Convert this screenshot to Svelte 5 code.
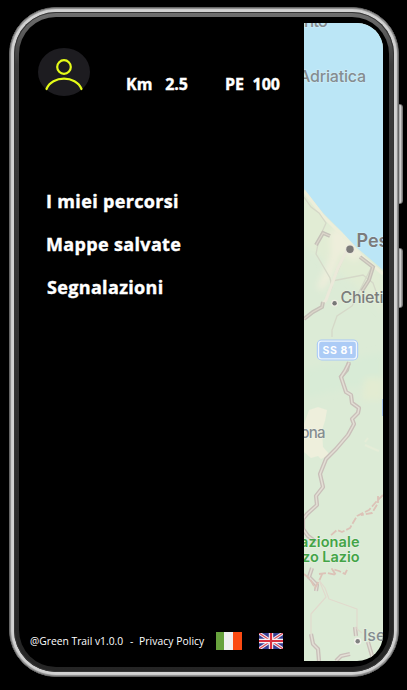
<script>
  const links = ['I miei percorsi', 'Mappe salvate', 'Segnalazioni'];
</script>

<main>
  <div class="key volume"></div>
  <div class="key power"></div>
  <div class="phone">
    <div class="bezel">
      <div class="display">
        <nav class="drawer">
          <header>
            <div class="avatar">
              <svg width="52" height="48" viewBox="0 0 52 48" fill="none" stroke="#e4fb18" stroke-width="2.2">
                <circle cx="26" cy="19" r="6.8" />
                <path d="M8.500 41C14 27.200 38 27.200 43.500 41" stroke-linecap="round" />
              </svg>
            </div>
            <div class="stat km"><span>Km</span><span>2.5</span></div>
            <div class="stat pe"><span>PE</span><span>100</span></div>
          </header>
          <ul>
            {#each links as link}
              <li>{link}</li>
            {/each}
          </ul>
          <footer>
            <span class="version">@Green Trail v1.0.0</span>
            <span class="dash">-</span>
            <span class="privacy">Privacy Policy</span>
            <svg class="it" width="26" height="18" viewBox="0 0 26 18">
              <path fill="#68a23d" d="M0 0h8v18H0z" />
              <path fill="#f0f0f0" d="M8 0h9v18H8z" />
              <path fill="#fb4a12" d="M17 0h9v18h-9z" />
            </svg>
            <svg class="uk" width="24" height="16" viewBox="0 0 24 16">
              <path fill="#343c91" d="M0 0h24v16H0z" />
              <path stroke="#f0eef5" stroke-width="3.2" d="M0 0l24 16M24 0L0 16" />
              <path stroke="#db4452" stroke-width="1.1" d="M0 0l24 16M24 0L0 16" />
              <path stroke="#f5f1f5" stroke-width="4.4" d="M12 0v16M0 8h24" />
              <path stroke="#d92f3e" stroke-width="2.2" d="M12 0v16M0 8h24" />
            </svg>
          </footer>
        </nav>
        <div class="map">
          <svg width="79" height="638" viewBox="304 23 79 638" fill="none">
            <defs>
              <filter id="soft" x="-30%" y="-30%" width="160%" height="160%"><feGaussianBlur stdDeviation="3" /></filter>
              <filter id="edge"><feGaussianBlur stdDeviation=".5" /></filter>
            </defs>
            <path fill="#dcebd6" d="M304 23h79v638h-79z" />
            <g filter="url(#soft)">
              <path fill="#e1ecd4" d="M304 190L383 275V312L350 280L304 245z" />
              <path fill="#d8ebd6" d="M304 370l79-18v28l-79 18z" />
              <path fill="#e3ecd2" d="M365 378h18v22h-21z" />
              <path fill="#eeeedb" d="M330 232l10-5 14 15 8 14-8 5-13-9-10 27-9 12-5-4 14-32z" />
            </g>
            <g filter="url(#edge)">
              <path fill="#bbe6f6" d="M304 23h79v247L369 258L356 247L342 232L323 213L304 189z" />
              <path stroke="#edeeda" stroke-width="3" d="M304 191L323 216L342 235L356 251L383 274" />
              <path fill="#eeefdc" d="M309 410l9-3 9 3-2 11-3 9 1 17 7 8-9 4-3-3-7 2-7-6-1-25z" />
              <path stroke="#e5edd8" stroke-width="2" d="M365 445l9 4 5 2M368 438l-3 4" />
            </g>
            <path stroke="#d5d8c8" stroke-width="1.3" d="M304 197l7 10 8 6 7 10-7 16M318 244l-2 10 14 24 2 9-7 15M332 284l12-27M332 281l31-6 10 8 5 14M371 268l-19 38-15 10-5 14v7" />
            <path stroke="#ebe9da" stroke-width="3" d="M347 250l-9 18-6 16-6 16-7 9" />
            <path stroke="#c5c1b8" stroke-width="4" d="M316 245l7-12 7 3M304 319l9-7 9-5 1-5M360 257l13 10-4 13-7 11M349 362l-2 8-7 8" />
            <path stroke="#dcd6ca" stroke-width="1.200" d="M316 245l7-12 7 3M304 319l9-7 9-5 1-5M360 257l13 10-4 13-7 11M349 362l-2 8-7 8" />
            <g stroke-linejoin="round" filter="url(#edge)">
              <path stroke="#c9bfb9" stroke-width="4.200" d="M349 363l-4 8-4 6 5 15 5 3 1 8 7 5-1 5-6 6 2 5-6 11-12 14-10 10-6 15 3 13-7 9 1 9-10 9-4 5v10l5 7 8 6M312 568l-3 9 8 8-1 6M311 634l2 10 5 5 1 12M336 661l5-5 9-2M355 627l1 9M368 642l5 17" />
              <path stroke="#e3dfd5" stroke-width="1.500" d="M349 363l-4 8-4 6 5 15 5 3 1 8 7 5-1 5-6 6 2 5-6 11-12 14-10 10-6 15 3 13-7 9 1 9-10 9-4 5v10l5 7 8 6M312 568l-3 9 8 8-1 6M311 634l2 10 5 5 1 12M336 661l5-5 9-2M355 627l1 9M368 642l5 17" />
              <path stroke="#dcc2b7" stroke-width="1.800" stroke-dasharray="7 2" d="M383 495l-7 7-7 8-12 6-7 12-8 4-5-2-7 6M378 496v7l-6 10-11 2M319 574l8-1 9 2-4-6 7 2 6 3 3-6M304 574l6 5 5 9 5-9 3-7" />
              <path stroke="#e1dacd" stroke-width="1.200" d="M319 580l6 8 4 11 28 10v20l5 4M319 580l7 17-15 17v20" />
            </g>
            <rect x="316.800" y="339.500" width="41.400" height="21" rx="5" fill="#a6c8f7" />
            <rect x="318.500" y="341.200" width="38" height="17.600" rx="3" fill="#accbf6" stroke="#f0f6fc" stroke-width="1.300" />
            <path stroke="#84aef8" stroke-width="1.200" d="M383 399v17" />
            <circle cx="350" cy="249.300" r="4.700" fill="#e9e5dc" />
            <circle cx="350" cy="249.300" r="3.700" fill="#7c7a79" />
            <circle cx="334.600" cy="303.200" r="3.400" fill="#f0eee4" />
            <circle cx="334.600" cy="303.200" r="2.200" fill="#777" />
            <circle cx="357.700" cy="641.200" r="3.700" fill="#f1f1e9" />
            <circle cx="357.700" cy="641.200" r="2.200" fill="#808080" />
            <g class="place">
              <text x="304" y="27" font-size="17" textLength="24">nto</text>
              <text x="299" y="82" font-size="16" textLength="67">Adriatica</text>
              <text x="356.500" y="247" font-size="18" font-weight="600" fill="#7b7b7b">Pes</text>
              <text x="340.500" y="303" font-size="16" textLength="43" fill="#7b7d7c">Chieti</text>
              <text x="300.500" y="438" font-size="15" textLength="25">ona</text>
              <text x="363" y="641" font-size="16">Ise</text>
            </g>
            <text class="road" x="322.500" y="353.700" textLength="30">SS 81</text>
            <g class="park">
              <text x="300" y="547" textLength="59.500">azionale</text>
              <text x="302" y="562" textLength="57.500">zo Lazio</text>
            </g>
          </svg>
        </div>
      </div>
    </div>
  </div>
</main>

<style>
  :global(body) {
    background: #000;
  }

  main {
    position: relative;
    width: 407px;
    height: 690px;
    box-sizing: border-box;
    padding: 7px 8px 13px 9px;
    background: #000;
    overflow: hidden;
    font-family: 'Open Sans', 'Noto Sans', sans-serif;
    color: #fff;
  }

  .key {
    position: absolute;
    left: 397px;
    width: 6px;
    box-sizing: border-box;
    border: 1px solid #777;
    border-radius: 0 3px 3px 0;
    background: linear-gradient(90deg, #777, #d5d5d5 60%, #888);
  }

  .volume {
    top: 104px;
    height: 100px;
  }

  .power {
    top: 248px;
    height: 60px;
  }

  .phone {
    position: relative;
    height: 670px;
    box-sizing: border-box;
    border: 1px solid #666;
    border-radius: 47px;
    padding: 4px;
    background: #d2d2d2;
    box-shadow: inset 0 0 1px 1px #888;
  }

  .bezel {
    height: 660px;
    box-sizing: border-box;
    border-radius: 42px;
    padding: 5px;
    background: linear-gradient(#707070, #3c3c3c 8%, #303030 60%, #252525);
    box-shadow: inset 0 0 0 1px #353535;
  }

  .display {
    display: flex;
    height: 650px;
    border-radius: 37px;
    background: #000;
    overflow: hidden;
  }

  .drawer {
    display: flex;
    flex-direction: column;
    width: 285px;
    flex: none;
  }

  header {
    display: flex;
    padding: 31px 0 0 19px;
    height: 48px;
    font-size: 16px;
    font-weight: 700;
    line-height: 22px;
    -webkit-text-stroke: 0.4px #fff;
  }

  .avatar {
    width: 52px;
    height: 48px;
    border-radius: 50%;
    background: #1d1c20;
  }

  .stat {
    display: flex;
    justify-content: space-between;
    margin-top: 25px;
  }

  .km {
    width: 62px;
    margin-left: 36px;
  }

  .pe {
    width: 55px;
    margin-left: 37px;
  }

  ul {
    display: flex;
    flex-direction: column;
    gap: 17px;
    margin: 92px 0 0 27px;
    padding: 0;
    list-style: none;
    font-size: 18px;
    font-weight: 700;
    letter-spacing: 0.34px;
    line-height: 26px;
    white-space: nowrap;
    -webkit-text-stroke: 0.4px #fff;
  }

  li:last-child {
    padding-left: 1px;
  }

  footer {
    display: flex;
    align-items: center;
    height: 20px;
    margin: auto 0 16px 11px;
    font-size: 10.3px;
    white-space: nowrap;
  }

  .version {
    width: 100px;
  }

  .dash {
    width: 9px;
  }

  .privacy {
    width: 77px;
    letter-spacing: 0.07px;
  }

  .uk {
    margin-left: 17px;
  }

  .map {
    width: 79px;
    height: 638px;
    margin-top: 6px;
    border-radius: 0 26px 26px 0;
    overflow: hidden;
  }

  .map svg {
    display: block;
  }

  text {
    font-family: Inter, Roboto, sans-serif;
    paint-order: stroke;
    stroke-width: 1.5px;
    stroke: #ffffff40;
  }

  .place {
    fill: #858d90;
    font-weight: 500;
  }

  .road {
    fill: #fff;
    font-size: 10.5px;
    font-weight: 700;
    stroke: none;
  }

  .park {
    fill: #43a447;
    font-size: 14.5px;
    font-weight: 600;
  }
</style>
